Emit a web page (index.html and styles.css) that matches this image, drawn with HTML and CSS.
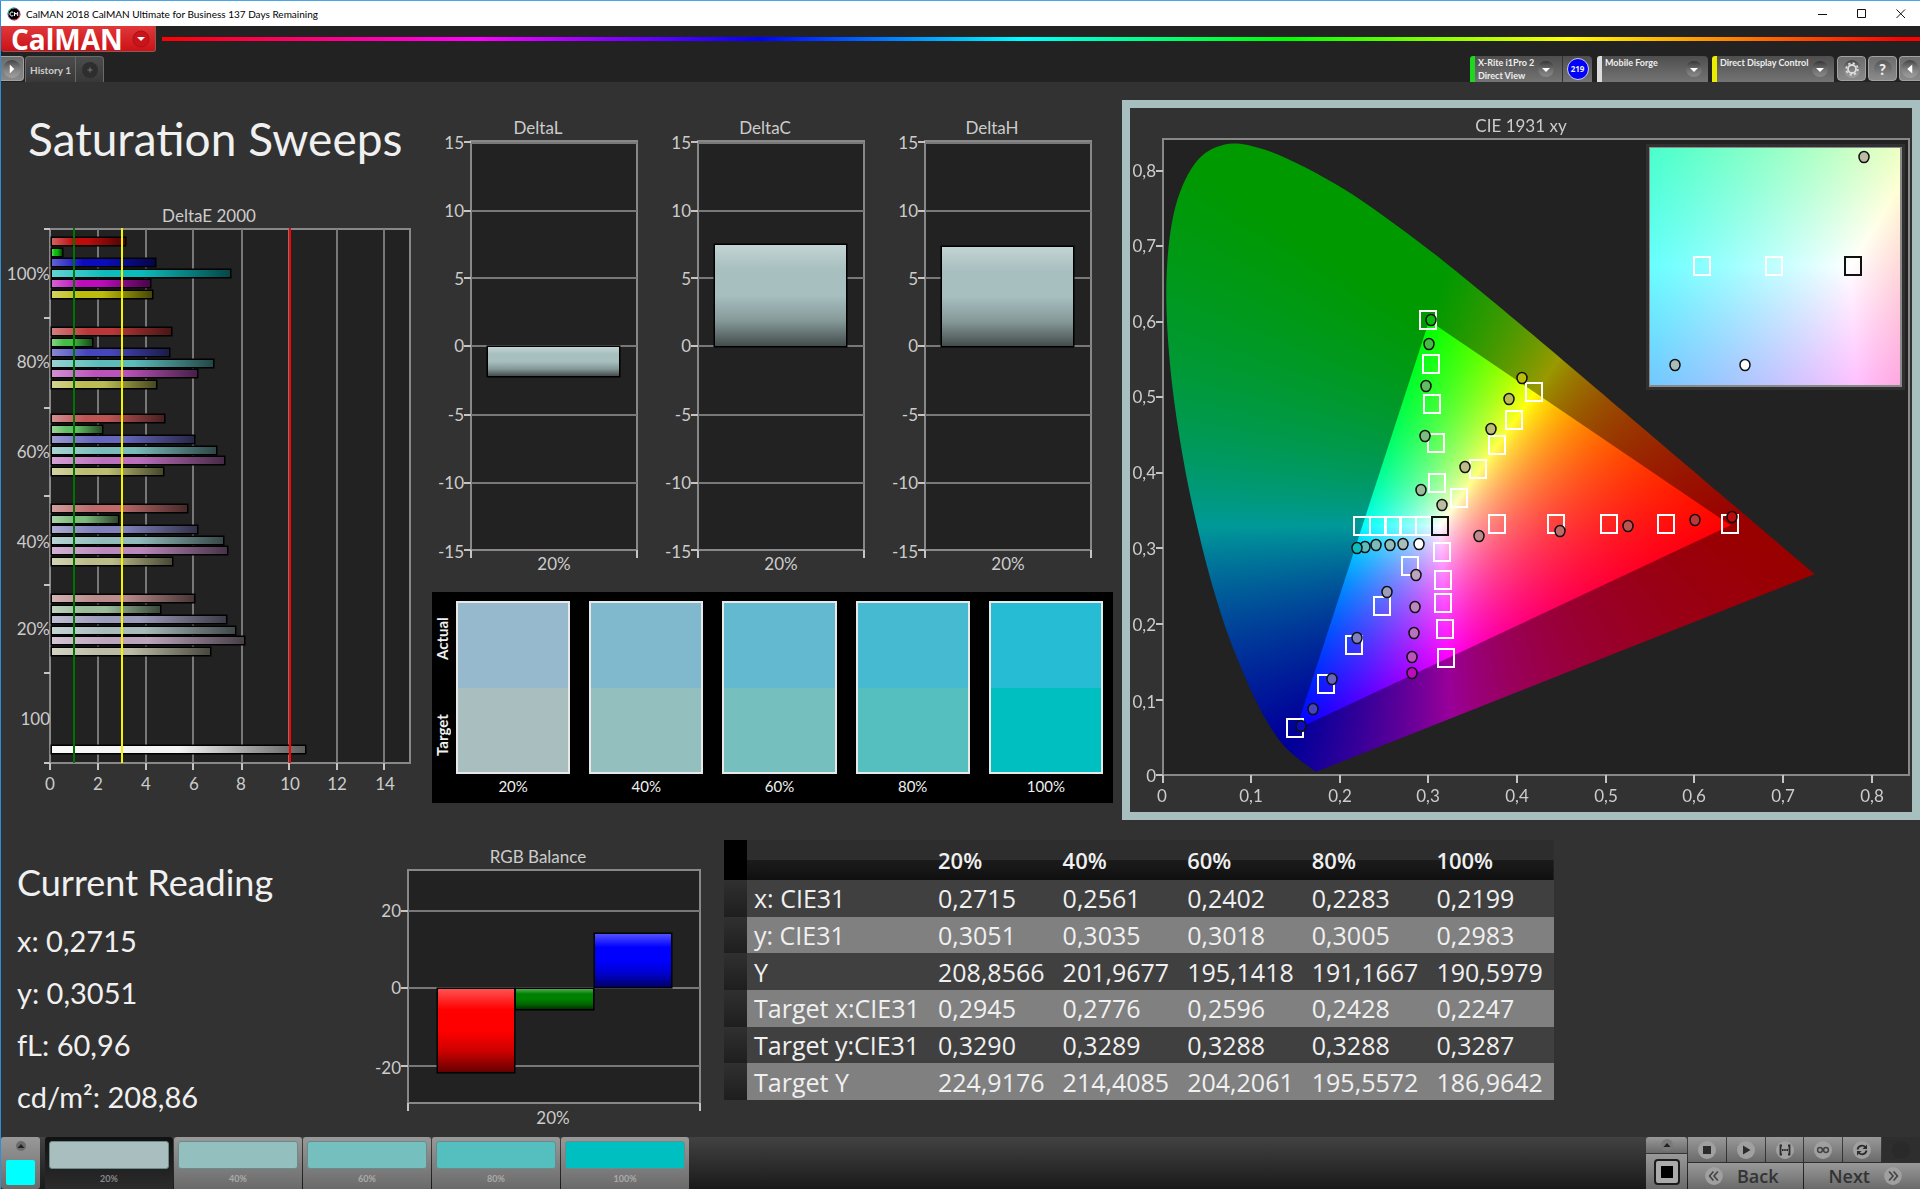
FILE: index.html
```html
<!DOCTYPE html>
<html lang="en">
<head>
<meta charset="utf-8">
<meta name="viewport" content="width=device-width, initial-scale=1">
<title>CalMAN 2018</title>
<link rel="stylesheet" href="styles.css">
</head>
<body>
<svg class="defs" width="0" height="0" aria-hidden="true">
  <defs>
    <linearGradient id="shade-x"><stop offset="0" stop-color="#fff" stop-opacity=".35"/><stop offset=".3" stop-color="#fff" stop-opacity="0"/><stop offset=".5" stop-color="#000" stop-opacity="0"/><stop offset="1" stop-color="#000" stop-opacity=".62"/></linearGradient>
    <linearGradient id="shade-y" x2="0" y2="1"><stop offset="0" stop-color="#fff" stop-opacity=".32"/><stop offset=".25" stop-color="#fff" stop-opacity="0"/><stop offset=".5" stop-color="#000" stop-opacity="0"/><stop offset=".75" stop-color="#000" stop-opacity=".2"/><stop offset="1" stop-color="#000" stop-opacity=".6"/></linearGradient>
    <linearGradient id="knob-fill" x2="0" y2="1"><stop offset="0" stop-color="#000" stop-opacity=".4"/><stop offset="1" stop-color="#fff" stop-opacity=".18"/></linearGradient>
    <symbol id="drop" viewBox="0 0 18 18"><circle cx="9" cy="9" r="8" fill="url(#knob-fill)"/><path d="M5 8h8l-4 4z" fill="#fff"/></symbol>
  </defs>
</svg>

<header class="titlebar">
  <svg class="app-icon" viewBox="0 0 14 14" aria-hidden="true"><circle cx="7" cy="7" r="6" fill="#000" stroke="#7a3fa0"/><path d="M1 7a6 6 0 0 1 6-6" fill="none" stroke="#0c8"/><path d="M13 7a6 6 0 0 1-6 6" fill="none" stroke="#e33"/><path d="M6.300 5.500a2 2 0 1 0 0 3M7.500 9V5.300l1.600 2 1.600-2V9" fill="none" stroke="#fff"/></svg>
  <span class="titlebar-text">CalMAN 2018 CalMAN Ultimate for Business 137 Days Remaining</span>
  <div class="window-buttons">
    <button aria-label="Minimize"><svg viewBox="0 0 10 10"><path d="M0 5.500h9" stroke="#111" fill="none"/></svg></button>
    <button aria-label="Maximize"><svg viewBox="0 0 10 10"><path d="M.5.5h8v8h-8z" stroke="#111" fill="none"/></svg></button>
    <button aria-label="Close"><svg viewBox="0 0 10 10"><path d="M.5.5l8.500 8.500M9 .5L.5 9" stroke="#111" fill="none"/></svg></button>
  </div>
</header>

<div class="brandbar">
  <button class="brand">CalMAN<svg class="brand-drop" viewBox="0 0 18 18" aria-hidden="true"><circle cx="9" cy="9" r="8" fill="#c8141a" stroke="#b01015"/><path d="M5 7h8l-4 4z" fill="#fff"/></svg></button>
  <div class="spectrum"></div>
</div>

<div class="toolbar">
  <button class="square-button play" aria-label="Show workflow"><svg viewBox="0 0 18 18"><circle cx="9" cy="9" r="8" fill="url(#knob-fill)"/><path d="M7 5v8l4-4z" fill="#fff"/></svg></button>
  <nav class="tabs">
    <button class="tab">History 1</button>
    <button class="tab tab-add" aria-label="Add history"><svg viewBox="0 0 18 18"><circle cx="9" cy="9" r="8" fill="#2e2e2e"/><path d="M9 6.500v5M6.500 9h5" stroke="#777" fill="none"/></svg></button>
  </nav>
  <div class="devices">
    <button class="device meter" aria-haspopup="true"><span class="device-name">X-Rite i1Pro 2<br>Direct View</span><svg class="device-drop"><use href="#drop"/></svg></button>
    <div class="meter-count"><span class="count">219</span></div>
    <div class="device source"><select aria-label="Source"><option>Mobile Forge</option></select><svg class="device-drop"><use href="#drop"/></svg></div>
    <div class="device display"><select aria-label="Display"><option>Direct Display Control</option></select><svg class="device-drop"><use href="#drop"/></svg></div>
    <button class="square-button" aria-label="Settings"><svg viewBox="0 0 18 18"><circle cx="9" cy="9" r="8" fill="url(#knob-fill)"/><circle cx="9" cy="9" r="3.600" fill="none" stroke="#ddd" stroke-width="1.600"/><circle cx="9" cy="9" r="5.200" fill="none" stroke="#ddd" stroke-width="1.600" stroke-dasharray="2 2.080"/></svg></button>
    <button class="square-button help" aria-label="Help"><span>?</span></button>
    <button class="square-button edge" aria-label="Show panel"><svg viewBox="0 0 18 18"><circle cx="9" cy="9" r="8" fill="url(#knob-fill)"/><path d="M11 5v8L6.500 9z" fill="#fff"/></svg></button>
  </div>
</div>

<main class="workspace">
  <section class="upper">
    <div class="column-sweeps">
      <h1>Saturation Sweeps</h1>
      <svg class="chart" viewBox="0 195 432 615" role="img" aria-label="DeltaE 2000">
        <text class="mid" x="209" y="222">DeltaE 2000</text>
        <rect class="plot" x="50" y="229" width="360" height="534"/>
        <path class="grid" d="M98 229V763M146 229V763M193 229V763M242 229V763M289 229V763M337 229V763M384 229V763"/>
        <path class="tick" d="M44 229h6M44 318h6M44 408h6M44 496h6M44 585h6M44 673h6M44 763h6M50 763v7M98 763v7M146 763v7M193 763v7M242 763v7M289 763v7M337 763v7M384 763v7"/>
        <g id="delta-e-bars"></g>
        <path d="M74 228V763" stroke="#007400" stroke-width="2"/>
        <path d="M122 228V763" stroke="#f4f400" stroke-width="2"/>
        <path d="M290 228V763" stroke="#f00" stroke-width="2"/>
        <g class="end"><text x="50" y="280">100%</text><text x="50" y="368">80%</text><text x="50" y="458">60%</text><text x="50" y="548">40%</text><text x="50" y="635">20%</text><text x="50" y="725">100</text></g>
        <g class="mid"><text x="50" y="790">0</text><text x="98" y="790">2</text><text x="146" y="790">4</text><text x="194" y="790">6</text><text x="241" y="790">8</text><text x="290" y="790">10</text><text x="337" y="790">12</text><text x="385" y="790">14</text></g>
      </svg>
    </div>

    <div class="column-deltas">
      <div class="delta-row">
        <svg class="chart" viewBox="0 0 227 470" role="img" aria-label="DeltaL">
          <text class="mid" x="106" y="24">DeltaL</text>
          <rect class="plot" x="39" y="31" width="166" height="409"/>
          <path class="grid" d="M39 33h166M39 101h166M39 168h166M39 236h166M39 305h166M39 373h166"/>
          <path class="tick" d="M32 32h7M32 101h7M32 168h7M32 236h7M32 305h7M32 373h7M32 440h7M39 440v8M205 440v8"/>
          <rect class="bar" x="56" y="237" width="131" height="29" fill="#a7bfbf"/><rect x="56" y="237" width="131" height="29" fill="url(#shade-y)"/>
          <g class="end"><text x="32" y="39">15</text><text x="32" y="107">10</text><text x="32" y="175">5</text><text x="32" y="242">0</text><text x="32" y="311">-5</text><text x="32" y="379">-10</text><text x="32" y="448">-15</text></g>
          <text class="mid" x="122" y="460">20%</text>
        </svg>
        <svg class="chart" viewBox="0 0 227 470" role="img" aria-label="DeltaC">
          <text class="mid" x="106" y="24">DeltaC</text>
          <rect class="plot" x="39" y="31" width="166" height="409"/>
          <path class="grid" d="M39 33h166M39 101h166M39 168h166M39 236h166M39 305h166M39 373h166"/>
          <path class="tick" d="M32 32h7M32 101h7M32 168h7M32 236h7M32 305h7M32 373h7M32 440h7M39 440v8M205 440v8"/>
          <rect class="bar" x="56" y="135" width="131" height="101" fill="#a7bfbf"/><rect x="56" y="135" width="131" height="101" fill="url(#shade-y)"/>
          <g class="end"><text x="32" y="39">15</text><text x="32" y="107">10</text><text x="32" y="175">5</text><text x="32" y="242">0</text><text x="32" y="311">-5</text><text x="32" y="379">-10</text><text x="32" y="448">-15</text></g>
          <text class="mid" x="122" y="460">20%</text>
        </svg>
        <svg class="chart" viewBox="0 0 227 470" role="img" aria-label="DeltaH">
          <text class="mid" x="106" y="24">DeltaH</text>
          <rect class="plot" x="39" y="31" width="166" height="409"/>
          <path class="grid" d="M39 33h166M39 101h166M39 168h166M39 236h166M39 305h166M39 373h166"/>
          <path class="tick" d="M32 32h7M32 101h7M32 168h7M32 236h7M32 305h7M32 373h7M32 440h7M39 440v8M205 440v8"/>
          <rect class="bar" x="56" y="137" width="131" height="99" fill="#a7bfbf"/><rect x="56" y="137" width="131" height="99" fill="url(#shade-y)"/>
          <g class="end"><text x="32" y="39">15</text><text x="32" y="107">10</text><text x="32" y="175">5</text><text x="32" y="242">0</text><text x="32" y="311">-5</text><text x="32" y="379">-10</text><text x="32" y="448">-15</text></g>
          <text class="mid" x="122" y="460">20%</text>
        </svg>
      </div>
      <div class="compare">
        <div class="compare-side"><span>Actual</span><span>Target</span></div>
        <div class="swatches">
          <figure><div class="pair"><i class="a20"></i><i class="t20"></i></div><figcaption>20%</figcaption></figure>
          <figure><div class="pair"><i class="a40"></i><i class="t40"></i></div><figcaption>40%</figcaption></figure>
          <figure><div class="pair"><i class="a60"></i><i class="t60"></i></div><figcaption>60%</figcaption></figure>
          <figure><div class="pair"><i class="a80"></i><i class="t80"></i></div><figcaption>80%</figcaption></figure>
          <figure><div class="pair"><i class="a100"></i><i class="t100"></i></div><figcaption>100%</figcaption></figure>
        </div>
      </div>
    </div>

    <div class="cie">
      <canvas id="cie-canvas" width="782" height="704"></canvas>
      <svg class="chart" viewBox="1130 108 782 704" role="img" aria-label="CIE 1931 xy">
        <text class="mid" x="1521" y="132">CIE 1931 xy</text>
        <path class="frame" d="M1163 139H1909V775H1163z"/>
        <path class="tick" d="M1156 775h7M1156 700h7M1156 624h7M1156 548h7M1156 473h7M1156 397h7M1156 322h7M1156 246h7M1156 171h7M1163 775v8M1251 775v8M1340 775v8M1428 775v8M1517 775v8M1606 775v8M1694 775v8M1783 775v8M1872 775v8"/>
        <g class="end"><text x="1156" y="782">0</text><text x="1156" y="708">0,1</text><text x="1156" y="631">0,2</text><text x="1156" y="555">0,3</text><text x="1156" y="479">0,4</text><text x="1156" y="403">0,5</text><text x="1156" y="328">0,6</text><text x="1156" y="252">0,7</text><text x="1156" y="177">0,8</text></g>
        <g class="mid"><text x="1162" y="802">0</text><text x="1251" y="802">0,1</text><text x="1340" y="802">0,2</text><text x="1428" y="802">0,3</text><text x="1517" y="802">0,4</text><text x="1606" y="802">0,5</text><text x="1694" y="802">0,6</text><text x="1783" y="802">0,7</text><text x="1872" y="802">0,8</text></g>
        <g id="cie-markers"></g>
      </svg>
    </div>
  </section>

  <section class="lower">
    <div class="reading">
      <h2>Current Reading</h2>
      <p>x: 0,2715</p>
      <p>y: 0,3051</p>
      <p>fL: 60,96</p>
      <p>cd/m²: 208,86</p>
    </div>
    <svg class="chart" viewBox="372 820 352 317" role="img" aria-label="RGB Balance">
      <text class="mid" x="538" y="863">RGB Balance</text>
      <rect class="plot" x="408" y="870" width="292" height="233"/>
      <path class="grid" d="M408 911h292M408 988h292M408 1066h292"/>
      <path class="tick" d="M401 911h7M401 988h7M401 1066h7M408 1103v8M700 1103v8"/>
      <rect class="bar" x="438" y="989" width="76" height="83" fill="#f00"/><rect x="438" y="989" width="76" height="83" fill="url(#shade-y)"/>
      <rect class="bar" x="516" y="989" width="77" height="20" fill="#008000"/><rect x="516" y="989" width="77" height="20" fill="url(#shade-y)"/>
      <rect class="bar" x="595" y="934" width="76" height="53" fill="#00f"/><rect x="595" y="934" width="76" height="53" fill="url(#shade-y)"/>
      <g class="end"><text x="401" y="917">20</text><text x="401" y="994">0</text><text x="401" y="1074">-20</text></g>
      <text class="mid" x="553" y="1124">20%</text>
    </svg>
    <table class="data">
      <colgroup><col class="col-handle"><col class="col-name"><col><col><col><col><col></colgroup>
      <thead><tr><td class="handle"></td><td></td><th scope="col">20%</th><th scope="col">40%</th><th scope="col">60%</th><th scope="col">80%</th><th scope="col">100%</th></tr></thead>
      <tbody>
        <tr><td class="handle"></td><th scope="row">x: CIE31</th><td>0,2715</td><td>0,2561</td><td>0,2402</td><td>0,2283</td><td>0,2199</td></tr>
        <tr><td class="handle"></td><th scope="row">y: CIE31</th><td>0,3051</td><td>0,3035</td><td>0,3018</td><td>0,3005</td><td>0,2983</td></tr>
        <tr><td class="handle"></td><th scope="row">Y</th><td>208,8566</td><td>201,9677</td><td>195,1418</td><td>191,1667</td><td>190,5979</td></tr>
        <tr><td class="handle"></td><th scope="row">Target x:CIE31</th><td>0,2945</td><td>0,2776</td><td>0,2596</td><td>0,2428</td><td>0,2247</td></tr>
        <tr><td class="handle"></td><th scope="row">Target y:CIE31</th><td>0,3290</td><td>0,3289</td><td>0,3288</td><td>0,3288</td><td>0,3287</td></tr>
        <tr><td class="handle"></td><th scope="row">Target Y</th><td>224,9176</td><td>214,4085</td><td>204,2061</td><td>195,5572</td><td>186,9642</td></tr>
      </tbody>
    </table>
  </section>
</main>

<footer class="footer">
  <button class="pattern" aria-label="Pattern window"><svg viewBox="0 0 14 12"><circle cx="7" cy="6" r="5" fill="#6b6b6b"/><path d="M3.500 8L7 4l3.500 4z" fill="#222"/></svg><span class="pattern-color"></span></button>
  <button class="level current"><span class="chip t20"></span>20%</button>
  <button class="level"><span class="chip t40"></span>40%</button>
  <button class="level"><span class="chip t60"></span>60%</button>
  <button class="level"><span class="chip t80"></span>80%</button>
  <button class="level"><span class="chip t100"></span>100%</button>
  <div class="transport">
    <div class="mode">
      <button class="mode-up" aria-label="More"><svg viewBox="0 0 14 14"><circle cx="7" cy="7" r="6" fill="#7a7a7a"/><path d="M3.500 9L7 5l3.500 4z" fill="#222"/></svg></button>
      <button class="mode-stop" aria-label="Stop mode"><svg viewBox="0 0 26 26"><rect x="1" y="1" width="24" height="24" rx="3" fill="#aaa" stroke="#1c1c1c" stroke-width="2"/><path d="M7 7h12v12H7z" fill="#000"/></svg></button>
    </div>
    <div class="keys">
      <button aria-label="Stop"><svg viewBox="0 0 20 20"><circle cx="10" cy="10" r="9" fill="#a0a0a0"/><path d="M6 6h8v8H6z" fill="#2c2c2c"/></svg></button>
      <button aria-label="Play"><svg viewBox="0 0 20 20"><circle cx="10" cy="10" r="9" fill="#a0a0a0"/><path d="M7 5.500l7.500 4.500L7 14.500z" fill="#2c2c2c"/></svg></button>
      <button aria-label="Step"><svg viewBox="0 0 20 20"><circle cx="10" cy="10" r="9" fill="#a0a0a0"/><path d="M7 5.500H5.500v9H7M13 5.500h1.500v9H13" fill="none" stroke="#2c2c2c" stroke-width="1.800"/><path d="M7 10h6" stroke="#2c2c2c" stroke-width="1.800" stroke-dasharray="1.600 .6"/></svg></button>
      <button aria-label="Continuous"><svg viewBox="0 0 20 20"><circle cx="10" cy="10" r="9" fill="#a0a0a0"/><circle cx="7" cy="10" r="2.400" fill="none" stroke="#444" stroke-width="1.500"/><circle cx="13" cy="10" r="2.400" fill="none" stroke="#444" stroke-width="1.500"/></svg></button>
      <button aria-label="Refresh"><svg viewBox="0 0 20 20"><circle cx="10" cy="10" r="9" fill="#a0a0a0"/><path d="M5.500 9.500a4.500 4.500 0 0 1 8-2M14.500 10.500a4.500 4.500 0 0 1-8 2" fill="none" stroke="#2c2c2c" stroke-width="1.800"/><path d="M15 4.500V9h-4.500zM5 15.500V11h4.500z" fill="#2c2c2c"/></svg></button>
      <button class="off" aria-label="Record"><svg viewBox="0 0 20 20"><circle cx="10" cy="10" r="9" fill="#2a2a2a"/></svg></button>
      <button class="step"><svg viewBox="0 0 18 18"><circle cx="9" cy="9" r="8" fill="#a0a0a0"/><path d="M8.500 5L5 9l3.500 4M12.500 5L9 9l3.500 4" fill="none" stroke="#444" stroke-width="1.500"/></svg>Back</button>
      <button class="step next">Next<svg viewBox="0 0 18 18"><circle cx="9" cy="9" r="8" fill="#a0a0a0"/><path d="M5.500 5L9 9l-3.500 4M9.500 5l3.500 4-3.500 4" fill="none" stroke="#444" stroke-width="1.500"/></svg></button>
    </div>
  </div>
</footer>
<script src="charts.js"></script>
</body>
</html>
```
FILE: styles.css
```css
* { box-sizing: border-box; }
body {
  margin: 0;
  min-height: 100vh;
  display: flex;
  flex-direction: column;
  background: #323232;
  border-top: 1px solid #4aa6e4;
  color: #f0f0f0;
  font-family: Lato, "Open Sans", sans-serif;
}
button, select { font: inherit; color: inherit; border: 0; padding: 0; margin: 0; }
svg { display: block; }
.defs { position: absolute; }
.titlebar, .brandbar, .toolbar, .workspace, .footer { box-shadow: inset 1px 0 #2f8fd6; }

/* window title */
.titlebar { display: flex; align-items: center; height: 25px; background: #fff; color: #000; padding-left: 7px; }
.app-icon { width: 14px; height: 14px; }
.titlebar-text { margin-left: 5px; font: 10px/16px Lato, sans-serif; }
.window-buttons { margin-left: auto; display: flex; }
.window-buttons button { width: 39px; height: 24px; display: grid; place-items: center; background: none; }
.window-buttons svg { width: 10px; height: 10px; }

/* brand and spectrum */
.brandbar { display: flex; height: 30px; padding-left: 1px; background: #222; align-items: flex-start; }
.brand {
  display: flex; align-items: center; justify-content: space-between;
  width: 155px; height: 26px; padding: 0 5px 0 10px;
  background: linear-gradient(#e0383a, #cc1216);
  border: solid #8a5a5a; border-width: 0 1px 1px 0; border-radius: 0 0 3px 3px;
  color: #fff; font: bold 28px/24px "Open Sans", sans-serif;
}
.brand-drop { width: 18px; height: 18px; }
.spectrum { flex: 1; height: 4px; margin: 11px 0 0 6px; background: linear-gradient(90deg, #f00, #f0f 18%, #00f 34%, #0ff 49%, #0f0 64%, #ff0 80%, #f00 99%); }

/* tabs and devices */
.toolbar { display: flex; height: 26px; padding-left: 1px; background: #222; }
.square-button {
  width: 29px; height: 25px; display: grid; place-items: center; flex: none;
  background: linear-gradient(#6c6c6c, #8a8a8a); border: 1px solid #a2a2a2; border-radius: 4px;
}
.square-button svg { width: 20px; height: 20px; }
.play { width: 23px; border-left: 0; border-radius: 0 4px 4px 0; }
.tabs { display: flex; margin-left: 1px; }
.tab { background: linear-gradient(#4c4c4c, #383838); border: solid #6a6a6a; border-width: 1px 0 0 1px; border-radius: 4px 0 0 0; color: #ccc; width: 50px; font-size: 10px; font-weight: bold; }
.tab-add { width: 29px; border-right-width: 1px; border-radius: 0 4px 0 0; display: grid; place-items: center; }
.tab-add svg { width: 18px; height: 18px; }
.devices { margin-left: auto; display: flex; color: #eee; font-size: 10px; line-height: 13px; }
.device { display: flex; align-items: center; background: linear-gradient(#4e4e4e, #747474); border-left: 5px solid #1ed81e; border-radius: 3px 4px 0 0; height: 26px; padding-right: 8px; text-align: left; }
.device-drop { width: 18px; height: 18px; flex: none; }
.device select, .device-name { flex: 1; min-width: 0; height: 26px; padding: 0 0 13px 3px; background: none; appearance: none; font-weight: bold; font-size: 9px; line-height: 13px; white-space: nowrap; }
.device-name { padding-bottom: 0; }
.meter { width: 92px; padding-right: 7px; border-top-right-radius: 0; }
.meter-count { width: 30px; margin-right: 5px; display: grid; place-items: center; background: linear-gradient(#4e4e4e, #747474); border-left: 1px solid #333; border-radius: 0 4px 0 0; }
.count { width: 22px; height: 22px; border-radius: 50%; background: #00f; border: 1px solid #ccd; text-align: center; font: bold 8px/20px "Open Sans", sans-serif; }
.source { width: 111px; border-left-color: #ddd; margin-right: 4px; padding-right: 5px; }
.display { width: 122px; border-left-color: #ecec00; margin-right: 3px; padding-right: 5px; }
.devices .square-button { margin-right: 2px; }
.help { font-weight: 900; font-size: 15px; }
.help span { width: 18px; height: 18px; border-radius: 50%; line-height: 18px; text-align: center; background: linear-gradient(#555, #8c8c8c); }
.devices .edge { width: 21px; margin-right: 0; border-right: 0; border-radius: 4px 0 0 4px; }

/* workspace */
.workspace { flex: 1; }
.upper { display: grid; grid-template-columns: 432fr 690fr 798fr; align-items: start; padding-top: 18px; }
.lower { display: grid; grid-template-columns: 372fr 352fr 830fr 366fr; align-items: start; }
h1, h2, p, figure { margin: 0; font-weight: normal; }
h1 { height: 95px; padding-left: 28px; font-size: 46px; line-height: 78px; white-space: nowrap; }

.chart { width: 100%; height: auto; font-size: 17px; fill: #ccc; }
.mid { text-anchor: middle; }
.end { text-anchor: end; }
.plot { fill: #222; stroke: #888; stroke-width: 2; }
.frame { fill: none; stroke: #888; stroke-width: 2; }
.grid { fill: none; stroke: #787878; stroke-width: 2; }
.tick { fill: none; stroke: #c4c4c4; stroke-width: 2; }
.bar { stroke: #000; stroke-width: 3; paint-order: stroke; }

.column-deltas { padding: 10px 9px 0 0; }
.delta-row { display: grid; grid-template-columns: repeat(3, 1fr); }
.compare { display: flex; margin-top: 12px; padding: 9px 10px 7px 0; background: #000; }
.swatches { flex: 1; display: grid; grid-template-columns: repeat(5, 1fr); column-gap: 19px; }
.compare-side { display: grid; grid-template-rows: 76px 116px; width: 20px; margin-right: 4px; font-size: 15px; font-weight: bold; line-height: 20px; }
.compare-side span { writing-mode: vertical-rl; transform: rotate(180deg); text-align: center; }
.pair { display: grid; height: 173px; border: 2px solid #e8e8e8; grid-template-rows: 1fr 1fr; }
figcaption { padding-top: 2px; text-align: center; font-size: 15px; line-height: 20px; height: 22px; }
.a20 { background: #96b9cd; } .a40 { background: #80b9cd; } .a60 { background: #63b9cf; } .a80 { background: #45bad1; } .a100 { background: #25bcd4; }
.t20 { background: #a9bfbf; } .t40 { background: #93bfbf; } .t60 { background: #76bfbf; } .t80 { background: #55bfbf; } .t100 { background: #00bfc1; }

.cie { display: grid; border: 8px solid #a7bfbf; }
.cie > * { grid-area: 1 / 1; width: 100%; height: auto; }
.cie .square { fill: none; stroke: #fff; stroke-width: 2; }
.cie .square.white-point { stroke: #111; }
.cie .dot { stroke: #111; stroke-width: 1.500; }

.reading { padding: 34px 0 0 17px; white-space: nowrap; }
h2 { font-size: 36px; line-height: 56px; padding-bottom: 5px; }
.reading p { font-size: 29px; line-height: 52px; }

.data { width: 100%; height: 260px; margin-top: 20px; border-collapse: collapse; table-layout: fixed; font: 25px/34px "Open Sans", sans-serif; }
.data th, .data td { padding: 0 0 0 7px; text-align: left; font-weight: normal; white-space: nowrap; }
.data thead tr { height: 40px; background: linear-gradient(#2d2d2d 50%, #1b1b1b 50%, #101010); }
.data thead th { font-size: 22px; font-weight: 600; }
.data tbody tr { background: #404040; }
.data tbody tr:nth-child(even) { background: #808080; }
.data .handle { background: linear-gradient(#303030, #1e1e1e); padding: 0; }
.data thead .handle { background: #000; }
.col-handle { width: 23px; }
.col-name { width: 184px; }

/* footer */
.footer { display: flex; height: 52px; padding-left: 1px; background: linear-gradient(#424242, #1a1a1a); }
.footer button { background: linear-gradient(#999, #6a6a6a); }
.pattern { width: 39px; margin-right: 5px; padding: 3px 4px 4px; display: flex; flex-direction: column; align-items: center; justify-content: space-between; border-radius: 3px; }
.pattern svg { width: 14px; height: 12px; }
.pattern-color { width: 29px; height: 25px; background: #0ff; border-radius: 2px; }
.footer .level { display: flex; flex-direction: column; align-items: center; width: 128px; margin-right: 1px; padding: 4px 4px 0; color: #aaa; border-radius: 3px 3px 0 0; font-size: 9px; font-weight: bold; line-height: 20px; }
.footer .current { background: linear-gradient(#111, #2c2c2c); color: #888; }
.chip { width: 100%; height: 31px; border: 1px solid #6d8a8a; border-radius: 3px; }
.transport { margin-left: auto; display: flex; }
.mode { width: 41px; display: flex; flex-direction: column; margin-right: 1px; }
.mode button { display: grid; place-items: center; }
.mode-up { height: 16px; border-radius: 3px 3px 0 0; }
.mode-up svg { width: 14px; height: 14px; }
.mode-stop { flex: 1; margin-top: 1px; }
.mode-stop svg { width: 26px; height: 26px; }
.keys { width: 232px; display: grid; grid-template-columns: repeat(6, 1fr); grid-template-rows: 25px 26px; gap: 1px; }
.keys button { display: grid; place-items: center; }
.keys svg { width: 20px; height: 20px; }
.keys .off { background: #2e2e2e; }
.keys .step { grid-column: span 3; display: flex; align-items: center; gap: 13px; padding-left: 16px; color: #333; font: 600 18px/24px "Open Sans", sans-serif; }
.keys .next { padding-left: 24px; }
```
FILE: charts.js
```js
const NS = 'http://www.w3.org/2000/svg';
const add = (parent, tag, attrs) => {
  const el = document.createElementNS(NS, tag);
  for (const k in attrs) el.setAttribute(k, attrs[k]);
  parent.appendChild(el);
};

// Sweep colours, most saturated first: red, green, blue, cyan, magenta, yellow
const palette = [
  ['#bc0c0c', '#0cbc0c', '#0c0cbc', '#0cbcbc', '#bc0cbc', '#bcbc0c'],
  ['#bc3838', '#44bc44', '#4646bc', '#5cbcbc', '#bc52bc', '#bcbc54'],
  ['#bc5454', '#62bc62', '#6666bc', '#7abcbc', '#bc6fbc', '#bcbc72'],
  ['#bc6a6a', '#7cbc7c', '#8080bc', '#92bcbc', '#bc88bc', '#bcbc8a'],
  ['#bc8c8c', '#9abc9a', '#9c9cbc', '#a8bcbc', '#bca4bc', '#bcbca4']
];

// Right end of each DeltaE bar, per saturation level
const ends = [
  [125, 62, 155, 230, 150, 152],
  [171, 92, 169, 213, 197, 156],
  [164, 102, 194, 216, 224, 163],
  [187, 118, 197, 223, 227, 172],
  [194, 160, 226, 235, 244, 210]
];
const groupTop = [238, 328, 415, 505, 595];
const offset = [0, 11, 21, 32, 42, 53];
const bars = document.getElementById('delta-e-bars');
const bar = (y, end, fill) => {
  const box = { x: 52, y: y, width: end - 52, height: 7 };
  add(bars, 'rect', { ...box, fill: fill, class: 'bar' });
  add(bars, 'rect', { ...box, fill: 'url(#shade-x)' });
};
ends.forEach((row, i) => row.forEach((end, j) => bar(groupTop[i] + offset[j], end, palette[i][j])));
bar(746, 305, '#f4f4f4');

// CIE diagram background
const canvas = document.getElementById('cie-canvas');
const ctx = canvas.getContext('2d');
const W = 782, H = 704;
const X0 = 33, Y0 = 667, UX = 887, UY = 757;
const px = x => X0 + x * UX, py = y => Y0 - y * UY;

function field(w, h, toXY, level) {
  const c = document.createElement('canvas');
  c.width = w; c.height = h;
  const g = c.getContext('2d');
  const img = g.createImageData(w, h);
  for (let j = 0, k = 0; j < h; j++) for (let i = 0; i < w; i++, k += 4) {
    const [x, y0] = toXY(i + .5, j + .5);
    const y = Math.max(y0, .001), z = 1 - x - y;
    const r = Math.max(0, 3.2406 * x - 1.5372 * y - .4986 * z);
    const gr = Math.max(0, -.9689 * x + 1.8758 * y + .0415 * z);
    const b = Math.max(0, .0557 * x - .204 * y + 1.057 * z);
    const m = 255 * level / Math.max(r, gr, b);
    img.data[k] = r * m; img.data[k + 1] = gr * m; img.data[k + 2] = b * m; img.data[k + 3] = 255;
  }
  g.putImageData(img, 0, 0);
  return c;
}
function clipped(points, source) {
  ctx.save();
  ctx.beginPath();
  points.forEach(p => ctx.lineTo(px(p[0]), py(p[1])));
  ctx.closePath();
  ctx.clip();
  ctx.drawImage(source, 0, 0);
  ctx.restore();
}
const knots = [[.1741,.005],[.1714,.0051],[.1689,.0069],[.1644,.0109],[.1566,.0177],[.144,.0297],[.1355,.0399],[.1241,.0578],[.1096,.0868],[.0913,.1327],[.0687,.2007],[.0454,.295],[.0235,.4127],[.0082,.5384],[.0039,.6548],[.0139,.7502],[.0389,.812],[.0743,.8338],[.1142,.8262],[.1547,.8059],[.1929,.7816],[.2296,.7543],[.3016,.6923],[.3731,.6245],[.4441,.5547],[.5125,.4866],[.5752,.4242],[.627,.3725],[.6658,.334],[.6915,.3083],[.719,.2809],[.7347,.2653]];
// Catmull-Rom smoothing of the spectral locus
const locus = [];
for (let i = 0; i < knots.length - 1; i++) {
  const a = knots[Math.max(i - 1, 0)], b = knots[i], c = knots[i + 1], d = knots[Math.min(i + 2, knots.length - 1)];
  for (let t = 0; t < 1; t += .125) locus.push([0, 1].map(n =>
    .5 * (2 * b[n] + (c[n] - a[n]) * t + (2 * a[n] - 5 * b[n] + 4 * c[n] - d[n]) * t * t + (3 * b[n] - a[n] - 3 * c[n] + d[n]) * t * t * t)));
}
locus.push([.7347, .2653]);

ctx.fillStyle = '#222';
ctx.fillRect(33, 31, 746, 636);
const plane = (i, j) => [(i - X0) / UX, (Y0 - j) / UY];
clipped(locus, field(W, H, plane, .6));
clipped([[.64, .33], [.3, .6], [.15, .06]], field(W, H, plane, 1));
ctx.fillStyle = '#303030';
ctx.fillRect(516, 36, 259, 246);
ctx.fillStyle = '#8a8a8a';
ctx.fillRect(519, 39, 253, 240);
ctx.drawImage(field(250, 237, (i, j) => [.2656 + i / 4257, .3574 - j / 4150], 1), 520, 40);

// Targets and measurements, 100% down to 20% for each hue
const marks = document.getElementById('cie-markers');
const squares = [
  [1428,320],[1431,364],[1432,404],[1436,443],[1437,483],
  [1534,392],[1514,420],[1497,445],[1478,469],[1459,498],
  [1362,526],[1378,526],[1393,526],[1408,526],[1424,526],
  [1730,524],[1666,524],[1609,524],[1556,524],[1497,524],
  [1442,552],[1443,580],[1443,603],[1445,629],[1446,658],
  [1410,566],[1382,606],[1354,645],[1326,684],[1295,728],
  [1702,266],[1774,266]
];
const square = (p, cls) => add(marks, 'rect', { x: p[0] - 8, y: p[1] - 9, width: 16, height: 18, class: cls });
squares.forEach(p => square(p, 'square'));
square([1440, 526], 'square white-point');
square([1853, 266], 'square white-point');
const dots = [
  [[1732,517],[1695,520],[1628,526],[1560,531],[1479,536]],
  [[1431,320],[1429,344],[1426,386],[1425,436],[1421,490]],
  [[1301,726],[1313,709],[1332,679],[1357,638],[1387,592]],
  [[1357,548],[1365,547],[1376,545],[1390,545],[1403,544]],
  [[1412,673],[1412,657],[1414,633],[1415,607],[1416,575]],
  [[1522,378],[1509,399],[1491,429],[1465,467],[1442,505]]
];
const dot = (p, fill) => add(marks, 'ellipse', { cx: p[0], cy: p[1], rx: 5, ry: 5.5, fill: fill, class: 'dot' });
dots.forEach((hue, h) => hue.map((p, s) => [p, palette[s][h]]).reverse().forEach(d => dot(...d)));
dot([1419, 544], '#fff');
dot([1864, 157], '#bcbca4');
dot([1675, 365], '#a8bcbc');
dot([1745, 365], '#fff');
```
